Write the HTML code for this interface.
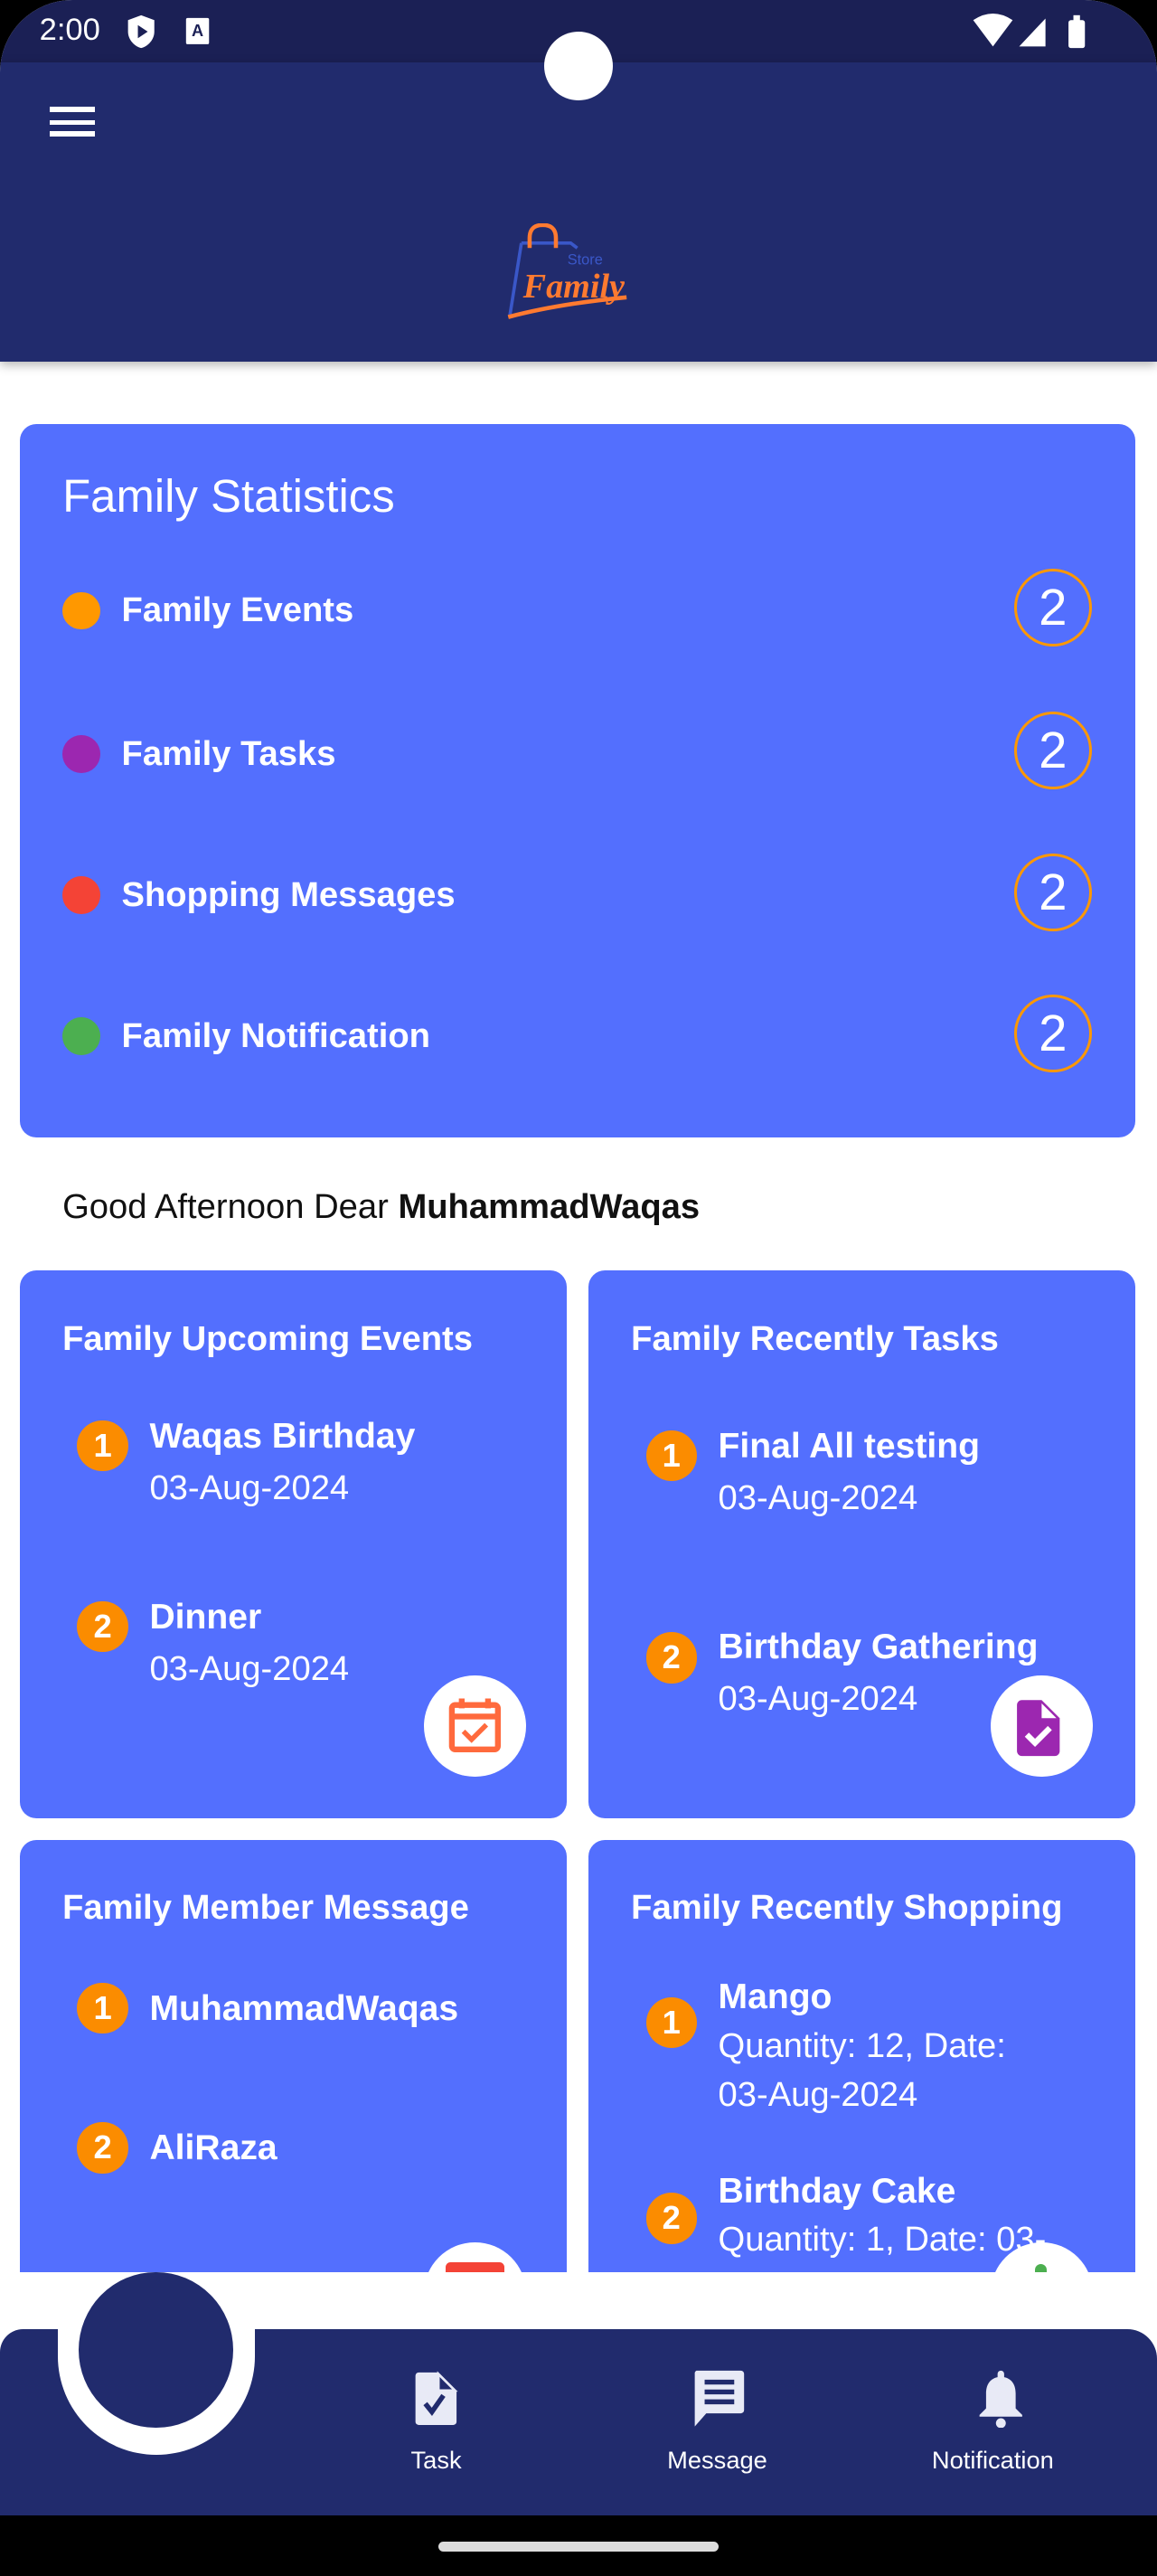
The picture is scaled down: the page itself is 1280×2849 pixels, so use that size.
<!DOCTYPE html>
<html><head><meta charset="utf-8"><style>
html,body{margin:0;padding:0;background:#000;width:1280px;height:2849px;overflow:hidden}
#w{zoom:1.81818;width:704px;height:1567px;position:relative;overflow:hidden;background:#fff;border-radius:44px 44px 0 0;font-family:"Liberation Sans","DejaVu Sans",sans-serif;color:#fff}
.a{position:absolute}
.card{position:absolute;background:#536ffe;border-radius:10px;overflow:hidden}
.t{position:absolute;white-space:nowrap;line-height:1}
.b{position:absolute;width:31px;height:31px;border-radius:50%;background:#fb8c00;color:#fff;font-weight:bold;font-size:20px;text-align:center;line-height:31px}
.dot{position:absolute;width:23px;height:23px;border-radius:50%}
.ring{position:absolute;width:44px;height:44px;border:2px solid #ff9800;border-radius:50%;text-align:center;line-height:44px;font-size:31px;color:#fff}
.ic{position:absolute;width:62px;height:62px;border-radius:50%;background:#fff}
.nm{font-size:21.5px;font-weight:bold}
.dt{font-size:21px}
</style></head><body><div id="w">
<div class="a" style="left:0;top:0;width:704px;height:38px;background:#1b2055"></div>
<div class="a" style="left:0;top:38px;width:704px;height:182px;background:#212b6d;box-shadow:0 2px 6px rgba(0,0,0,.3)"></div>
<div class="t" style="left:24px;top:9px;font-size:19px">2:00</div>
<svg class="a" style="left:76px;top:8px" width="20" height="22" viewBox="0 0 20 22"><path d="M10 1L2 4v7c0 5 4 9 8 10 4-1 8-5 8-10V4z" fill="#fff"/><path d="M8 7v8l6-4z" fill="#1b2055"/></svg>
<svg class="a" style="left:112px;top:10px" width="16" height="18" viewBox="0 0 16 18"><rect x="1" y="1" width="14" height="16" rx="1" fill="#fff"/><text x="8" y="12" font-size="10" font-weight="bold" text-anchor="middle" fill="#1b2055" font-family="Liberation Sans">A</text></svg>
<svg class="a" style="left:590px;top:8px" width="74" height="22" viewBox="0 0 74 22"><path d="M2 4q12-8 24 0L14 20z" fill="#fff"/><path d="M46 3v17H30z" fill="#fff"/><rect x="60" y="4" width="10" height="17" rx="1.5" fill="#fff"/><rect x="63" y="1" width="4" height="4" fill="#fff"/></svg>
<div class="a" style="left:331px;top:19px;width:42px;height:42px;border-radius:50%;background:#fff"></div>
<div class="a" style="left:30px;top:65px;width:28px;height:3px;background:#fff"></div>
<div class="a" style="left:30px;top:73px;width:28px;height:3px;background:#fff"></div>
<div class="a" style="left:30px;top:80px;width:28px;height:3px;background:#fff"></div>
<svg class="a" style="left:305px;top:136px" width="80" height="62" viewBox="0 0 80 62"><path d="M12 12h30l4 3M12 12L5 56" stroke="#3a57c8" stroke-width="2" fill="none"/><path d="M17 15v-6q0-8 8-8t8 8v6" stroke="#ff7a30" stroke-width="2.5" fill="none"/><text x="40" y="25" font-size="9" fill="#3a57c8" font-family="Liberation Sans">Store</text><text x="13" y="45" font-size="21" font-style="italic" font-weight="bold" fill="#ff7a30" font-family="Liberation Serif">Family</text><path d="M4 57q30-8 72-12" stroke="#ff7a30" stroke-width="2.5" fill="none"/></svg>

<div class="a" style="left:0;top:220px;width:704px;height:1162px;overflow:hidden;z-index:2">
<div class="card" style="left:12px;top:38px;width:679px;height:434px">
<div class="t" style="left:26px;top:30px;font-size:28px">Family Statistics</div>
<div class="dot" style="left:26px;top:102px;background:#ff9800"></div><div class="t" style="left:62px;top:103px;font-size:21px;font-weight:bold">Family Events</div><div class="ring" style="left:605px;top:88px">2</div>
<div class="dot" style="left:26px;top:189px;background:#9c27b0"></div><div class="t" style="left:62px;top:190px;font-size:21px;font-weight:bold">Family Tasks</div><div class="ring" style="left:605px;top:175px">2</div>
<div class="dot" style="left:26px;top:275px;background:#f44336"></div><div class="t" style="left:62px;top:276px;font-size:21px;font-weight:bold">Shopping Messages</div><div class="ring" style="left:605px;top:261px">2</div>
<div class="dot" style="left:26px;top:361px;background:#4caf50"></div><div class="t" style="left:62px;top:362px;font-size:21px;font-weight:bold">Family Notification</div><div class="ring" style="left:605px;top:347px">2</div>
</div>
<div class="t" style="left:38px;top:504px;font-size:21px;color:#111">Good Afternoon Dear <b>MuhammadWaqas</b></div>

<div class="card" style="left:12px;top:553px;width:333px;height:333px">
<div class="t" style="left:26px;top:31px;font-size:21px;font-weight:bold">Family Upcoming Events</div>
<div class="b" style="left:35px;top:91px">1</div><div class="t nm" style="left:79px;top:90px">Waqas Birthday</div><div class="t dt" style="left:79px;top:122px">03-Aug-2024</div>
<div class="b" style="left:35px;top:201px">2</div><div class="t nm" style="left:79px;top:200px">Dinner</div><div class="t dt" style="left:79px;top:232px">03-Aug-2024</div>
<div class="ic" style="left:246px;top:246px"><svg width="62" height="62" viewBox="0 0 62 62"><rect x="17" y="18" width="28" height="27" rx="2" fill="none" stroke="#ff6a3d" stroke-width="3.5"/><path d="M17 25h28M23 14v6M39 14v6" stroke="#ff6a3d" stroke-width="3.5"/><path d="M24 34l5 5 9-9" stroke="#ff6a3d" stroke-width="3" fill="none"/></svg></div>
</div>
<div class="card" style="left:358px;top:553px;width:333px;height:333px">
<div class="t" style="left:26px;top:31px;font-size:21px;font-weight:bold">Family Recently Tasks</div>
<div class="b" style="left:35px;top:97px">1</div><div class="t nm" style="left:79px;top:96px">Final All testing</div><div class="t dt" style="left:79px;top:128px">03-Aug-2024</div>
<div class="b" style="left:35px;top:220px">2</div><div class="t nm" style="left:79px;top:218px">Birthday Gathering</div><div class="t dt" style="left:79px;top:250px">03-Aug-2024</div>
<div class="ic" style="left:245px;top:246px"><svg width="62" height="62" viewBox="0 0 62 62"><path d="M16 18a3 3 0 013-3h12l11 11v20a3 3 0 01-3 3H19a3 3 0 01-3-3z" fill="#9c27b0"/><path d="M31 17v9h9z" fill="#fff"/><path d="M22 36l5 5 9-9" stroke="#fff" stroke-width="3.5" fill="none"/></svg></div>
</div>

<div class="card" style="left:12px;top:899px;width:333px;height:340px">
<div class="t" style="left:26px;top:31px;font-size:21px;font-weight:bold">Family Member Message</div>
<div class="b" style="left:35px;top:87px">1</div><div class="t nm" style="left:79px;top:92px">MuhammadWaqas</div>
<div class="b" style="left:35px;top:172px">2</div><div class="t nm" style="left:79px;top:177px">AliRaza</div>
<div class="ic" style="left:246px;top:245px"><div class="a" style="left:13px;top:12px;width:36px;height:20px;background:#f44336;border-radius:3px"></div></div>
</div>
<div class="card" style="left:358px;top:899px;width:333px;height:340px">
<div class="t" style="left:26px;top:31px;font-size:21px;font-weight:bold">Family Recently Shopping</div>
<div class="b" style="left:35px;top:96px">1</div><div class="t nm" style="left:79px;top:85px">Mango</div><div class="t dt" style="left:79px;top:115px">Quantity: 12, Date:</div><div class="t dt" style="left:79px;top:145px">03-Aug-2024</div>
<div class="b" style="left:35px;top:215px">2</div><div class="t nm" style="left:79px;top:203px">Birthday Cake</div><div class="t dt" style="left:79px;top:233px">Quantity: 1, Date: 03-</div>
<div class="ic" style="left:245px;top:245px"><div class="a" style="left:27px;top:13px;width:7px;height:12px;background:#4caf50;border-radius:4px 4px 0 0"></div></div>
</div>
</div>

<div class="a" style="left:0;top:1417px;width:704px;height:113px;background:#212b6d;border-radius:14px 18px 0 0"></div>
<div class="a" style="left:35px;top:1383px;width:120px;height:110px;border-radius:0 0 60px 60px;background:#fff;z-index:3"></div>
<div class="a" style="left:48px;top:1382px;width:94px;height:95px;border-radius:50%;background:#212b6d;z-index:4"></div>
<svg class="a" style="left:251px;top:1442px" width="30" height="34" viewBox="0 0 30 34"><path d="M2 3a2 2 0 012-2h12l11 11v19a2 2 0 01-2 2H4a2 2 0 01-2-2z" fill="#e8eaf6"/><path d="M16 2v10h10" fill="#212b6d"/><path d="M16 2l0 10h10z" fill="none" stroke="#e8eaf6" stroke-width="1.5"/><path d="M8 20l4 5 7-10" stroke="#212b6d" stroke-width="3" fill="none"/></svg>
<svg class="a" style="left:421px;top:1441px" width="34" height="36" viewBox="0 0 34 36"><path d="M3 1h27a2 2 0 012 2v22a2 2 0 01-2 2H9l-7 8V3a2 2 0 011-2z" fill="#e8eaf6"/><path d="M8 8h18M8 14h18M8 20h18" stroke="#212b6d" stroke-width="3"/></svg>
<svg class="a" style="left:594px;top:1441px" width="30" height="36" viewBox="0 0 30 36"><path d="M15 1a2 2 0 012 2v2c5 1 7 5 7 10v9l4 4v1H2v-1l4-4v-9c0-5 2-9 7-10V3a2 2 0 012-2z" fill="#e8eaf6"/><circle cx="15" cy="33" r="3" fill="#e8eaf6"/></svg>
<div class="t" style="left:250px;top:1489px;font-size:15px">Task</div>
<div class="t" style="left:406px;top:1489px;font-size:15px">Message</div>
<div class="t" style="left:567px;top:1489px;font-size:15px">Notification</div>
<div class="a" style="left:0;top:1530px;width:704px;height:40px;background:#000"></div>
<div class="a" style="left:267px;top:1546px;width:170px;height:6px;border-radius:3px;background:#ddd"></div>
</div></body></html>
